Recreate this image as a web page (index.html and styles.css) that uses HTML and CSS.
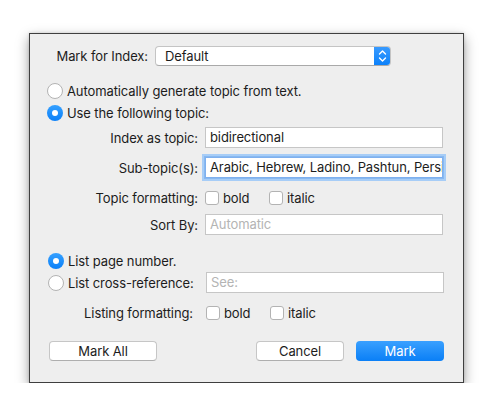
FILE: index.html
```html
<!DOCTYPE html>
<html>
<head>
<meta charset="utf-8">
<link rel="stylesheet" href="styles.css">
</head>
<body>
<div class="dialog">
  <div class="row row-popup">
    <span class="lbl lbl-popup">Mark for Index:</span>
    <div class="popup">
      <span class="popup-text">Default</span>
      <span class="popup-btn">
        <svg width="17" height="20" viewBox="0 0 17 20"><path d="M5.5 8 L8.5 5 L11.5 8 M5.5 12 L8.5 15 L11.5 12" fill="none" stroke="#fff" stroke-width="1.4" stroke-linecap="round" stroke-linejoin="round"/></svg>
      </span>
    </div>
  </div>

  <div class="row row-radio r1"><span class="radio"></span><span>Automatically generate topic from text.</span></div>
  <div class="row row-radio r2"><span class="radio on"></span><span>Use the following topic:</span></div>

  <div class="row row-field r3"><span class="lbl">Index as topic:</span><div class="field">bidirectional</div></div>
  <div class="row row-field r4"><span class="lbl">Sub-topic(s):</span><div class="field focus">Arabic, Hebrew, Ladino, Pashtun, Persian</div></div>
  <div class="row row-field r5"><span class="lbl">Topic formatting:</span>
    <div class="checks"><span class="check-item"><span class="check"></span>bold</span><span class="check-item"><span class="check"></span>italic</span></div>
  </div>
  <div class="row row-field r6"><span class="lbl">Sort By:</span><div class="field ph">Automatic</div></div>

  <div class="row row-radio r7"><span class="radio on"></span><span>List page number.</span></div>
  <div class="row row-list r8"><span class="radio"></span><span class="lbl-list">List cross-reference:</span><div class="field ph">See:</div></div>
  <div class="row row-field2 r9"><span class="lbl lbl2">Listing formatting:</span>
    <div class="checks"><span class="check-item"><span class="check"></span>bold</span><span class="check-item"><span class="check"></span>italic</span></div>
  </div>

  <div class="row row-buttons">
    <button class="btn btn-markall">Mark All</button>
    <span class="spacer"></span>
    <button class="btn btn-cancel">Cancel</button>
    <button class="btn btn-primary">Mark</button>
  </div>
</div>
</body>
</html>
```
FILE: styles.css
```css
html, body {
  margin: 0;
  padding: 0;
  background: #ffffff;
}
body {
  font-family: Inter, "Liberation Sans", Arial, sans-serif;
  font-size: 13px;
  letter-spacing: -0.1px;
  color: #1c1c1c;
  padding: 33px 0 0 29px;
}
.dialog {
  box-sizing: border-box;
  width: 435px;
  height: 350px;
  background: #eeeeee;
  border: 1px solid #3f3f3f;
  box-shadow: 0 5px 12px rgba(0,0,0,0.38), 0 0 3px rgba(0,0,0,0.15);
  padding-top: 12px;
  display: flex;
  flex-direction: column;
}
.row {
  display: flex;
  align-items: center;
  white-space: nowrap;
}
.lbl {
  display: block;
  text-align: right;
  width: 168px;
  flex: none;
}
.row-popup { height: 20px; }
.lbl-popup { width: 118px; margin-right: 7px; }
.popup {
  box-sizing: border-box;
  width: 236px;
  height: 20px;
  background: #fff;
  border: 1px solid #c4c4c4;
  border-bottom-color: #a9a9a9;
  border-radius: 4px;
  display: flex;
  align-items: center;
  overflow: hidden;
}
.popup-text { flex: 1; padding-left: 9px; }
.popup-btn {
  width: 17px;
  height: 20px;
  margin: -1px -1px -1px 0;
  background: linear-gradient(#3b9cff, #0a80fa);
  display: flex;
  align-items: center;
  justify-content: center;
}
.popup-btn svg { display: block; }

.row-radio { height: 16px; padding-left: 17px; }
.radio {
  box-sizing: border-box;
  width: 16px;
  height: 16px;
  border-radius: 50%;
  border: 1px solid #b3b3b3;
  background: #fff;
  margin-right: 4px;
  flex: none;
  position: relative;
}
.radio.on {
  border: none;
  background: linear-gradient(#35a0ff, #0b80f8);
}
.radio.on::after {
  content: "";
  position: absolute;
  left: 5px;
  top: 5px;
  width: 6px;
  height: 6px;
  border-radius: 50%;
  background: #fff;
}
.r1 { margin-top: 17px; }
.r2 { margin-top: 6px; }

.row-field { height: 21px; }
.row-field .lbl { margin-right: 7px; }
.field {
  box-sizing: border-box;
  width: 238px;
  height: 21px;
  background: #fff;
  border: 1px solid #c6c6c6;
  padding: 0 4px;
  line-height: 19px;
  overflow: hidden;
  white-space: nowrap;
}
.field.focus {
  box-shadow: 0 0 0 1px #88b9f1, 0 0 0 3px #a7cdf7;
  border-color: #7fb0ee;
}
.field.ph { color: #b4b4b4; }
.r3 { margin-top: 6px; }
.r4 { margin-top: 9px; }
.r5 { margin-top: 9px; }
.r6 { margin-top: 6px; }
.r7 { margin-top: 18px; padding-left: 18px; }
.r8 { margin-top: 3px; }
.r9 { margin-top: 9px; }

.checks { display: flex; align-items: center; }
.check-item { display: flex; align-items: center; width: 64px; }
.check {
  box-sizing: border-box;
  width: 14px;
  height: 14px;
  border: 1px solid #b3b3b3;
  border-radius: 3px;
  background: #fff;
  margin-right: 4px;
  flex: none;
}

.row-list { height: 21px; padding-left: 18px; }
.lbl-list { width: 138px; flex: none; }
.row-list .field { width: 238px; }

.row-field2 { height: 21px; }
.lbl2 { width: 163px; margin-right: 13px; }

.row-buttons {
  margin-top: 18px;
  height: 20px;
  padding: 0 19px;
  gap: 12px;
}
.spacer { flex: 1; }
.btn {
  box-sizing: border-box;
  height: 20px;
  font-family: inherit;
  font-size: 13px;
  letter-spacing: inherit;
  color: #1c1c1c;
  background: #fff;
  border: 1px solid #c6c6c6;
  border-bottom-color: #aeaeae;
  border-radius: 4px;
  padding: 0;
  margin: 0;
}
.btn-markall { width: 108px; }
.btn-cancel { width: 88px; }
.btn-primary {
  width: 88px;
  color: #fff;
  border: none;
  background: linear-gradient(#3aa0ff, #0a7ff6);
}
```
